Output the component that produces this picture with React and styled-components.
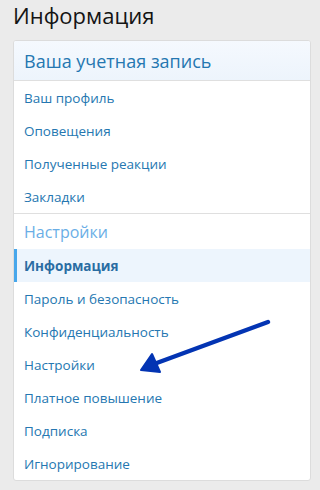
import React from 'react';
import styled, { createGlobalStyle } from 'styled-components';

//------------------------------------------------------------------------------
// STYLES:
//------------------------------------------------------------------------------
const GlobalStyle = createGlobalStyle`
  html, body {
    margin: 0;
    padding: 0;
    background: #ebebeb;
  }
  body {
    font-family: 'Open Sans', 'Noto Sans', 'DejaVu Sans', sans-serif;
  }
`;

const Page = styled.div`
  position: relative;
  width: 320px;
  height: 490px;
  overflow: hidden;
  padding: 0 9px 0 13px;
  box-sizing: border-box;
`;

const Title = styled.h1`
  margin: 0;
  height: 40px;
  font-size: 22px;
  font-weight: 400;
  color: #141414;
  line-height: 30px;
`;

const Card = styled.nav`
  background: #fff;
  border: 1px solid #dcdcdc;
  border-radius: 3px;
  overflow: hidden;
`;

const CardHeader = styled.h2`
  margin: 0;
  height: 39px;
  display: flex;
  align-items: center;
  padding: 0 10px;
  font-size: 18px;
  font-weight: 400;
  color: #2577b1;
  background: linear-gradient(to bottom, #f5f9fe, #edf4fc);
  border-bottom: 1px solid #dfdfdf;
`;

const Section = styled.div`
  & + & {
    border-top: 1px solid #dfdfdf;
  }
`;

const SubHeader = styled.div`
  height: 35px;
  display: flex;
  align-items: center;
  padding: 0 10px;
  font-size: 16px;
  color: #6aaee6;
`;

const Item = styled.a`
  display: flex;
  align-items: center;
  height: 33px;
  padding: 0 10px 0 7px;
  font-size: 13.5px;
  text-decoration: none;
  color: ${({ active }) => (active ? '#2a6da3' : '#2577b1')};
  font-weight: ${({ active }) => (active ? 700 : 400)};
  background: ${({ active }) => (active ? '#edf5fd' : 'transparent')};
  border-left: 3px solid ${({ active }) => (active ? '#47a7eb' : 'transparent')};
`;

const Arrow = styled.svg`
  position: absolute;
  left: 0;
  top: 0;
  pointer-events: none;
`;

//------------------------------------------------------------------------------
// DATA:
//------------------------------------------------------------------------------
const ACCOUNT = ['Ваш профиль', 'Оповещения', 'Полученные реакции', 'Закладки'];
const SETTINGS = [
  'Информация',
  'Пароль и безопасность',
  'Конфиденциальность',
  'Настройки',
  'Платное повышение',
  'Подписка',
  'Игнорирование',
];

//------------------------------------------------------------------------------
// COMPONENT:
//------------------------------------------------------------------------------
const App = () => (
  <Page>
    <GlobalStyle />
    <Title>Информация</Title>
    <Card>
      <CardHeader>Ваша учетная запись</CardHeader>
      <Section>
        {ACCOUNT.map((label) => (
          <Item key={label} href="#">{label}</Item>
        ))}
      </Section>
      <Section>
        <SubHeader>Настройки</SubHeader>
        {SETTINGS.map((label, i) => (
          <Item key={label} href="#" active={i === 0}>{label}</Item>
        ))}
      </Section>
    </Card>
    {/* Annotation arrow drawn over the menu */}
    <Arrow width="320" height="490" viewBox="0 0 320 490">
      <path d="M268 322 L154 364" stroke="#0334b3" strokeWidth="4.5" strokeLinecap="round" fill="none" />
      <path d="M141 370 L152 354 L160 372 Z" fill="#0334b3" stroke="#0334b3" strokeWidth="2" strokeLinejoin="round" />
    </Arrow>
  </Page>
);

export default App;
